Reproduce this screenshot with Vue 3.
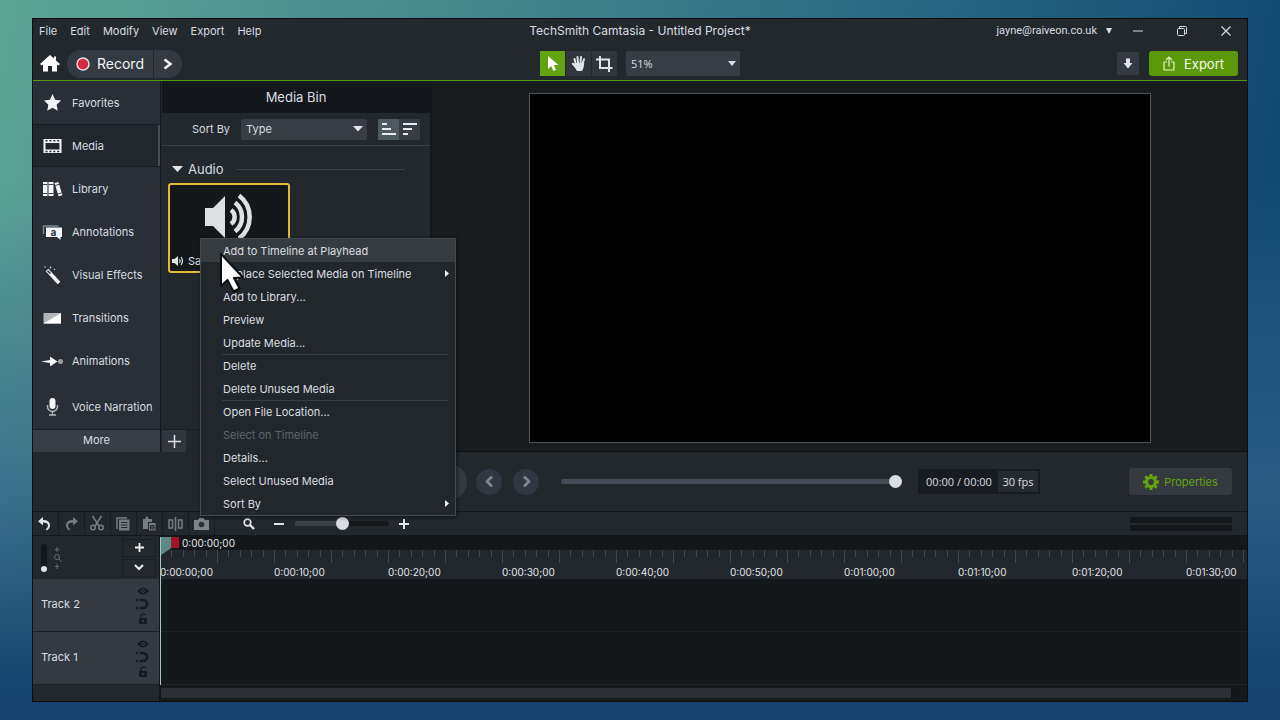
<script setup>
import { ref } from 'vue'

const menus = ['File', 'Edit', 'Modify', 'View', 'Export', 'Help']

const panels = [
  { name: 'Favorites', icon: 'star' },
  { name: 'Media', icon: 'film' },
  { name: 'Library', icon: 'books' },
  { name: 'Annotations', icon: 'callout' },
  { name: 'Visual Effects', icon: 'wand' },
  { name: 'Transitions', icon: 'transition' },
  { name: 'Animations', icon: 'arrow' },
  { name: 'Voice Narration', icon: 'mic' }
]
const activePanel = ref('Media')

const contextMenu = [
  { label: 'Add to Timeline at Playhead', hover: true },
  { label: 'Replace Selected Media on Timeline', sub: true },
  { label: 'Add to Library...' },
  { label: 'Preview' },
  { label: 'Update Media...' },
  { separator: true },
  { label: 'Delete' },
  { label: 'Delete Unused Media' },
  { separator: true },
  { label: 'Open File Location...' },
  { label: 'Select on Timeline', disabled: true },
  { label: 'Details...' },
  { label: 'Select Unused Media' },
  { label: 'Sort By', sub: true }
]

const marks = Array.from({ length: 10 }, (_, i) => {
  const s = i * 10
  return `0:${String(Math.floor(s / 60)).padStart(2, '0')}:${String(s % 60).padStart(2, '0')};00`
})

const tracks = ['Track 2', 'Track 1']
const zoom = ref('51%')
const sortBy = ref('Type')
const position = ref(100)
const timelineZoom = ref(50)
const trackHeight = ref(0)
</script>

<template>
  <div class="desktop">
    <div class="window">
      <header class="top">
        <div class="titlebar">
          <nav class="menus" aria-label="Main menu">
            <button v-for="m in menus" :key="m">{{ m }}</button>
          </nav>
          <h1>TechSmith Camtasia - Untitled Project*</h1>
          <div class="account">
            <button class="user">jayne@raiveon.co.uk <svg width="6" height="6" viewBox="0 0 6 6"><path d="M0 0h6L3 6z" fill="currentColor" /></svg></button>
            <button class="win" aria-label="Minimize"><svg width="12" height="12" viewBox="0 0 12 12"><path d="M1 6h10" stroke="currentColor" /></svg></button>
            <button class="win" aria-label="Restore"><svg width="12" height="12" viewBox="0 0 12 12" fill="none" stroke="currentColor"><rect x="1.500" y="3.500" width="7" height="7" rx="1" /><path d="M3.500 3.500V1.500H9.500Q10.500 1.500 10.500 2.500V8.500H8.500" /></svg></button>
            <button class="win" aria-label="Close"><svg width="12" height="12" viewBox="0 0 12 12"><path d="M1.500 1.500l9 9m0-9l-9 9" stroke="currentColor" stroke-width="1.200" /></svg></button>
          </div>
        </div>
        <div class="toolbar">
          <div class="left">
            <button class="home" aria-label="Home"><svg width="20" height="17" viewBox="0 0 20 17"><path d="M10 0L0 9l1.500 1.500L3 9.500V16.500H8V11h4v5.500h5V9.500l1.500 1L20 9l-4-3.600V1.500h-2V3.600z" fill="#fff" /></svg></button>
            <button class="record"><svg width="14" height="14" viewBox="0 0 14 14"><circle cx="7" cy="7" r="6" fill="#cf2a40" stroke="#f3dfe2" stroke-width="1.500" /></svg>Record</button>
            <button class="record-more" aria-label="Record options"><svg width="10" height="12" viewBox="0 0 10 12"><path d="M1.500 1.500L7.500 6l-6 4.500" fill="none" stroke="#fff" stroke-width="2.400" /></svg></button>
          </div>
          <div class="tools">
            <div class="modes">
              <button class="on" aria-label="Edit"><svg width="14" height="17" viewBox="0 0 14 17"><path d="M2 1v13l3.200-3 2.200 5 2.600-1.200-2.200-4.800H12.500z" fill="#fff" /></svg></button>
              <button aria-label="Pan"><svg width="16" height="17" viewBox="0 0 16 17" fill="none" stroke="#dfe4e8" stroke-linecap="round"><path d="M4.700 9L3.500 4M7 8L6.500 2M9.500 8L10 2M11.500 9L13 4.200" stroke-width="2" /><path d="M5 12L1.800 8.800" stroke-width="2.200" /><path d="M4 8h8.500l.8-.2L12.500 13 11 16H6L3.500 12z" fill="#dfe4e8" stroke="none" /></svg></button>
              <button aria-label="Crop"><svg width="17" height="16" viewBox="0 0 17 16" fill="none" stroke="#dfe4e8" stroke-width="2"><path d="M4 0v12h12.500M0 3.500h13V16" /></svg></button>
            </div>
            <label class="select zoom">
              <select v-model="zoom" aria-label="Canvas zoom"><option>51%</option><option>100%</option></select>
              <svg width="8" height="5" viewBox="0 0 8 5"><path d="M0 0h8L4 5z" fill="#d8dde1" /></svg>
            </label>
          </div>
          <div class="right">
            <button class="download" aria-label="Download"><svg width="10" height="11" viewBox="0 0 10 11"><path d="M3 0.500h4v4.500h2.500L5 10.500.5 5H3z" fill="#dfe4e8" /></svg></button>
            <button class="export"><svg width="12" height="15" viewBox="0 0 12 15" fill="none" stroke="#e3f0cf" stroke-width="1.200"><path d="M4 6H1v8h10V6H8M6 10.500V1.500M3 4l3-3 3 3" /></svg>Export</button>
          </div>
        </div>
      </header>

      <main class="work">
        <nav class="side" aria-label="Panels">
          <button v-for="p in panels" :key="p.name" :class="{ active: activePanel === p.name }" @click="activePanel = p.name">
            <svg width="22" height="20" viewBox="0 0 22 20" fill="#f4f6f7">
              <path v-if="p.icon === 'star'" d="M10.500 1l2.600 5.800 6 .7-4.500 4.200 1.200 6.100-5.300-3.100-5.300 3.100 1.200-6.100L2 7.500l6-.7z" />
              <g v-else-if="p.icon === 'film'"><path fill-rule="evenodd" d="M1.500 3h18v14h-18zM3.500 7v6.500h14V7z" /><path d="M3.500 4.800h14M3.500 15.500h14" stroke="#23282e" stroke-width="1.600" stroke-dasharray="2 1.900" /></g>
              <g v-else-if="p.icon === 'books'"><path d="M1 3h4.500v14H1zM6.500 3h5v14h-5zM12.500 4l3.900-1 4.100 13.200-3.900 1z" /><path d="M1 5.500h4.500M1 14.500h4.500M6.500 5.500h5M6.500 14.500h5M13 6.500l4.300-1.200M15.700 15l4.300-1.200" stroke="#394047" stroke-width="1" /></g>
              <g v-else-if="p.icon === 'callout'"><path d="M1.500 12V4h15" fill="none" stroke="#7e868e" stroke-width="1.500" /><path d="M4 5.500h16v9.500h-1.500v3l-3.500-3H4z" /><text x="8.500" y="13.500" font-size="10" font-weight="700" fill="#272e35">a</text></g>
              <g v-else-if="p.icon === 'wand'"><path d="M5 5l12 13" stroke="#f4f6f7" stroke-width="3.500" /><path d="M5.500 5.600l3 3.200" stroke="#3a4047" stroke-width="1.600" /><path d="M8.500 1l1 1.500-1 1.500-1-1.500zM12.500 3.500l1 1-1 1-1-1zM3 1l1 1-1 1-1-1z" fill="#a8afb5" /></g>
              <g v-else-if="p.icon === 'transition'"><path d="M1.500 5h17.500v10.500H1.500z" fill="#b2b6ba" /><path d="M19 5v10.500H1.500z" fill="#fff" /></g>
              <g v-else-if="p.icon === 'arrow'"><path d="M-1 10.500L8 9V5.500l7.500 5-7.500 5V12z" /><circle cx="18.500" cy="10.500" r="2.500" fill="#9aa1a7" /></g>
              <g v-else><rect x="7.500" y="1" width="6" height="11" rx="3" /><path d="M5.500 8v1.500a5 5 0 0 0 10 0V8M10.500 14.500V18M7 18h7" fill="none" stroke="#b5bbc0" stroke-width="1.400" /></g>
            </svg>
            <span>{{ p.name }}</span>
          </button>
          <button class="more">More</button>
        </nav>

        <section class="bin">
          <h2>Media Bin</h2>
          <div class="sort">
            <label for="sort">Sort By</label>
            <div class="select">
              <select id="sort" v-model="sortBy"><option>Type</option><option>Name</option></select>
              <svg width="10" height="6" viewBox="0 0 10 6"><path d="M0 0h10L5 5.500z" fill="#e4e7e9" /></svg>
            </div>
            <div class="order">
              <button class="on" aria-label="Ascending"><svg width="14" height="12" viewBox="0 0 14 12" stroke="#e8ecee" stroke-width="2"><path d="M0 1h5M0 6h9M0 11h14" /></svg></button>
              <button aria-label="Descending"><svg width="14" height="12" viewBox="0 0 14 12" stroke="#e8ecee" stroke-width="2"><path d="M0 1h14M0 6h9M0 11h5" /></svg></button>
            </div>
          </div>
          <div class="group">
            <button><svg width="11" height="6" viewBox="0 0 11 6"><path d="M0 0h11L5.500 6z" fill="#e4e7e9" /></svg>Audio</button>
            <hr>
          </div>
          <div class="thumb">
            <svg class="speaker" width="50" height="46" viewBox="0 0 50 46"><path d="M0 14h8L20 2v42L8 32H0z" fill="#dde1e4" /><path d="M26 16a8.500 8.500 0 0 1 0 14M30 8.500a18.500 18.500 0 0 1 0 29M34 1.500a27 27 0 0 1 0 43" fill="none" stroke="#dde1e4" stroke-width="4.500" /></svg>
            <div class="caption"><svg width="12" height="10" viewBox="0 0 12 10"><path d="M0 3h2.500L6 0v10L2.500 7H0z" fill="#e4e7e9" /><path d="M7.500 3q1.500 2 0 4M9 1q3 4 0 8" fill="none" stroke="#e4e7e9" stroke-width="1.200" /></svg>Sample</div>
          </div>
          <div class="bin-foot"><button aria-label="Import media"><svg width="13" height="13" viewBox="0 0 13 13"><path d="M6.500 0v13M0 6.500h13" stroke="#e0e3e6" stroke-width="1.500" /></svg></button></div>
        </section>

        <section class="stage" aria-label="Canvas"><div class="canvas"></div></section>
      </main>

      <section class="playback" aria-label="Playback">
        <button class="round play" aria-label="Play"><svg width="12" height="12" viewBox="0 0 12 12"><path d="M1 0l11 6-11 6z" fill="#aab0b6" /></svg></button>
        <button class="round" aria-label="Previous"><svg width="9" height="13" viewBox="0 0 9 13"><path d="M7 1.500L2 6.500l5 5" fill="none" stroke="#7f8792" stroke-width="2.600" /></svg></button>
        <button class="round next" aria-label="Next"><svg width="9" height="13" viewBox="0 0 9 13"><path d="M2 1.500l5 5-5 5" fill="none" stroke="#7f8792" stroke-width="2.600" /></svg></button>
        <input v-model="position" class="seek" type="range" aria-label="Position">
        <div class="time"><span>00:00 / 00:00</span><b>30 fps</b></div>
        <button class="props"><svg width="16" height="16" viewBox="0 0 16 16"><circle cx="8" cy="8" r="4.500" fill="none" stroke="#62a30f" stroke-width="3.200" /><path d="M8 0v3M8 13v3M0 8h3M13 8h3M2.300 2.300l2.200 2.200M11.500 11.500l2.200 2.200M13.700 2.300l-2.200 2.200M4.500 11.500l-2.200 2.200" stroke="#62a30f" stroke-width="3" /></svg>Properties</button>
      </section>

      <section class="edit" aria-label="Timeline tools">
        <button aria-label="Undo"><svg width="14" height="14" viewBox="0 0 14 14"><path d="M5 0v3q7 0 7 5.500 0 3-3.500 5L8 12q2-1.500 2-3.500 0-3-5-3v3L0 4.300z" fill="#e2e5e8" /></svg></button>
        <button aria-label="Redo"><svg width="14" height="14" viewBox="0 0 14 14"><path d="M9 0v3Q2 3 2 8.500q0 3 3.500 5L6 12Q4 10.500 4 8.500q0-3 5-3v3l5-4.200z" fill="#757c82" /></svg></button>
        <button aria-label="Cut"><svg width="14" height="15" viewBox="0 0 14 15" fill="none" stroke="#757c82" stroke-width="1.500"><path d="M2.500 0l6.500 10M11.500 0L5 10" /><circle cx="3" cy="11.500" r="2.300" /><circle cx="11" cy="11.500" r="2.300" /></svg></button>
        <button aria-label="Copy"><svg width="14" height="14" viewBox="0 0 14 14"><path d="M1 12V1h10" fill="none" stroke="#757c82" stroke-width="1.500" /><path d="M3 2.500h10.500v11H3z" fill="#757c82" /><path d="M5 5.500h6.500M5 8h6.500M5 10.500h6.500" stroke="#23282d" /></svg></button>
        <button aria-label="Paste"><svg width="14" height="15" viewBox="0 0 14 15"><path d="M1 3h2L5 0l2 3h3v3H6v7H1z" fill="#757c82" /><path d="M7 7h6.500v7.500H7z" fill="#757c82" /><path d="M8.500 9.500H12v3.500H8.500zm0 1.700H12" fill="none" stroke="#23282d" /></svg></button>
        <button aria-label="Split"><svg width="15" height="14" viewBox="0 0 15 14" fill="none" stroke="#757c82" stroke-width="1.500"><path d="M1 3h3.500v8H1zM10.500 3H14v8h-3.500zM7.500 0v14" /></svg></button>
        <button aria-label="Snapshot"><svg width="15" height="12" viewBox="0 0 15 12"><path d="M0 2h4l1.500-2h4L11 2h4v10H0z" fill="#7d848a" /><circle cx="7.500" cy="6.500" r="2.800" fill="#2b3137" /></svg></button>
        <div class="zoomer">
          <svg width="12" height="12" viewBox="0 0 12 12" fill="none" stroke="#dfe3e6"><circle cx="4.500" cy="4.500" r="3.300" stroke-width="1.700" /><path d="M7 7l4 4" stroke-width="2.400" /></svg>
          <button aria-label="Zoom out"><svg width="10" height="10" viewBox="0 0 10 10"><path d="M0 5h10" stroke="#dfe3e6" stroke-width="2" /></svg></button>
          <input v-model="timelineZoom" class="zoom-range" type="range" aria-label="Timeline zoom">
          <button aria-label="Zoom in"><svg width="10" height="10" viewBox="0 0 10 10"><path d="M0 5h10M5 0v10" stroke="#dfe3e6" stroke-width="2" /></svg></button>
        </div>
        <div class="meters"><i></i><i></i></div>
      </section>

      <section class="timeline" aria-label="Timeline">
        <div class="heads">
          <div class="corner">
            <input v-model="trackHeight" class="vertical" type="range" aria-label="Track height">
            <svg width="9" height="22" viewBox="0 0 9 22" fill="none" stroke="#666d73"><circle cx="4" cy="10" r="2.500" /><path d="M6 12l2.500 2.500M4 0v5M2 2.500h4M4 17v5M2 19.500h4" /></svg>
            <div class="add">
              <button aria-label="Add track"><svg width="9" height="9" viewBox="0 0 9 9"><path d="M0 4.500h9M4.500 0v9" stroke="#f0f2f3" stroke-width="1.800" /></svg></button>
              <button aria-label="Collapse"><svg width="10" height="7" viewBox="0 0 10 7"><path d="M1 1l4 4 4-4" fill="none" stroke="#f0f2f3" stroke-width="2" /></svg></button>
            </div>
          </div>
          <div v-for="t in tracks" :key="t" class="head">
            <span>{{ t }}</span>
            <div class="toggles">
              <button aria-label="Visibility"><svg width="12" height="8" viewBox="0 0 12 8"><path d="M0 4q6-7 12 0-6 7-12 0z" fill="#171b1f" /><circle cx="6" cy="4" r="2" fill="#363c43" /><circle cx="6" cy="4" r="1" fill="#171b1f" /></svg></button>
              <button aria-label="Magnet"><svg width="13" height="12" viewBox="0 0 13 12" fill="none" stroke="#171b1f" stroke-width="2.600"><path d="M3.500 2H7a4 4 0 0 1 0 8H3.500M0 2h2M0 10h2" /></svg></button>
              <button aria-label="Lock"><svg width="10" height="11" viewBox="0 0 10 11"><path d="M1 5h8v6H1z" fill="#171b1f" /><path d="M3 5V2.500Q5 0 7.500 2" fill="none" stroke="#171b1f" stroke-width="1.300" /><circle cx="5" cy="8" r="1.200" fill="#363c43" /></svg></button>
            </div>
          </div>
          <div class="foot"></div>
        </div>
        <div class="lanes">
          <div class="clock">0:00:00;00</div>
          <div class="ruler">
            <div v-for="m in marks" :key="m" class="mark">
              <div class="ticks"><i v-for="n in 10" :key="n"></i></div>
              <span>{{ m }}</span>
            </div>
          </div>
          <div v-for="t in tracks" :key="t" class="lane"></div>
          <div class="foot"><div class="scroll"></div></div>
          <div class="playhead"><svg width="20" height="18" viewBox="0 0 20 18"><path d="M0 0h10.500v11L0 18z" fill="#5f8885" /><path d="M10.500 0H18v11h-7.500z" fill="#a5142a" /></svg></div>
        </div>
      </section>

      <div class="context" role="menu">
        <template v-for="(c, i) in contextMenu" :key="i">
          <hr v-if="c.separator">
          <button v-else role="menuitem" :class="{ hover: c.hover }" :disabled="c.disabled">
            {{ c.label }}
            <svg v-if="c.sub" width="4" height="7" viewBox="0 0 4 7"><path d="M0 0l4 3.500L0 7z" fill="#f0f2f3" /></svg>
          </button>
        </template>
      </div>
      <svg class="pointer" width="28" height="42" viewBox="0 0 28 42"><path d="M2 2v32l6.500-6 6 11.500 6-3L15 26l9-.5z" fill="#fff" stroke="#0c0e10" stroke-width="2" stroke-linejoin="round" /></svg>
    </div>
  </div>
</template>

<style>
body { margin: 0; background: #16466f; }
</style>

<style scoped>
* { box-sizing: border-box; }
.desktop {
  height: 100vh; min-height: 640px; padding: 18px 32px 18px;
  display: flex;
  background:
    linear-gradient(to bottom, rgba(50, 98, 138, 0) 25%, rgba(50, 98, 138, .75) 68%, #13436e 97%),
    linear-gradient(100deg, #5ca594 0%, #43838b 38%, #276480 68%, #124a74 92%);
  font: 400 11px/16px Inter, "Liberation Sans", sans-serif; color: #dadde0;
}
button, select, input { font: inherit; color: inherit; margin: 0; }
button { border: 0; padding: 0; background: none; display: flex; align-items: center; justify-content: center; white-space: nowrap; }
svg { display: block; flex: none; overflow: visible; }
h1, h2 { margin: 0; font-weight: 400; }
hr { border: 0; margin: 0; height: 1px; }
.window { position: relative; flex: 1; min-width: 0; display: flex; flex-direction: column; background: #23282d; border: 1px solid #0b0e11; }

.top { border-bottom: 1px solid #5a9a12; }
.titlebar, .toolbar { display: grid; grid-template-columns: 1fr auto 1fr; align-items: center; }
.titlebar { height: 24px; }
.toolbar { height: 37px; padding-top: 4px; }
.menus { display: flex; gap: 13px; padding-left: 6px; }
h1 { font-size: 12px; }
.account { display: flex; justify-content: flex-end; align-items: center; padding-right: 15px; }
.user { font: 11px/16px Roboto, sans-serif; gap: 9px; margin-right: 20px; }
.win { width: 12px; height: 16px; }
.win + .win { margin-left: 32px; }
.left, .right, .tools, .modes { display: flex; align-items: center; }
.left { padding-left: 7px; }
.home { margin-right: 7px; }
.record, .record-more { height: 28px; background: #343a41; color: #f1f3f4; font-size: 14px; }
.record { width: 86px; gap: 7px; border-radius: 14px 0 0 14px; }
.record-more { width: 28px; margin-left: 1px; border-radius: 0 14px 14px 0; }
.tools { gap: 9px; }
.modes { gap: 1px; }
.modes button { width: 25px; height: 25px; background: #30363d; }
.modes .on { background: #62a30f; }
.select { display: grid; align-items: center; background: #373d44; border-radius: 2px; }
.select select, .select svg { grid-area: 1 / 1; }
.select select { appearance: none; width: 100%; border: 0; padding: 0 24px 0 5px; background: none; height: 22px; }
.select svg { justify-self: end; margin-right: 4px; pointer-events: none; }
.zoom { width: 114px; font: 11px/16px "Open Sans", sans-serif; }
.zoom select { height: 25px; }
.right { justify-content: flex-end; padding-right: 9px; gap: 10px; }
.download { width: 22px; height: 23px; background: #343a41; }
.export { width: 89px; height: 25px; background: #5b990b; color: #f6faef; font-size: 13px; gap: 9px; border-radius: 3px; }

.work { flex: 1; min-height: 0; display: flex; }
.side { width: 128px; display: flex; flex-direction: column; background: #282f36; border-right: 1px solid #14181c; }
.side button { height: 43px; justify-content: flex-start; padding-left: 9px; gap: 8px; }
.side .active { background: #22272d; border: solid #181c21; border-width: 1px 0; box-shadow: inset -2px 0 #464d54; }
.side button:nth-last-child(2) { flex: 1; padding-top: 3px; }
.side .more { height: 23px; background: #373e45; justify-content: center; padding: 0 0 2px; border-top: 1px solid #181c20; }
.bin { width: 271px; display: flex; flex-direction: column; border-right: 2px solid #14181c; padding-left: 1px; }
h2 { height: 32px; background: #14181c; text-align: center; font-size: 13px; line-height: 32px; }
.sort { height: 33px; display: flex; align-items: center; padding-left: 30px; border-bottom: 1px solid #383f45; }
.sort .select { width: 126px; margin: 0 11px; }
.sort .select select { height: 21px; }
.order { display: flex; }
.order button { width: 21px; height: 21px; background: #373d44; }
.order .on { background: #4d5a60; }
.group { display: flex; align-items: center; gap: 12px; height: 36px; padding: 10px 25px 0 10px; }
.group button { gap: 5px; font-size: 13px; }
.group hr { flex: 1; background: #3b4247; }
.thumb { width: 122px; height: 90px; margin: 1px 0 0 6px; border: 2px solid #e2b93b; border-radius: 3px; background: #14181b; display: flex; flex-direction: column; justify-content: space-between; }
.speaker { margin: 9px 0 0 35px; }
.caption { display: flex; align-items: center; gap: 4px; padding: 0 0 2px 2px; }
.bin-foot { margin-top: auto; border-top: 1px solid #1a1e22; height: 23px; display: flex; }
.bin-foot button { width: 24px; background: #31373e; }
.stage { flex: 1; min-width: 0; background: #1a1d20; padding: 12px 0 8px 1px; display: flex; justify-content: center; border-bottom: 1px solid #0c0f12; }
.canvas { height: 100%; aspect-ratio: 16 / 9; background: #000; border: 1px solid #50585a; }

.playback { height: 60px; padding: 0 15px 0 398px; display: flex; align-items: center; border-bottom: 1px solid #14181c; }
.round { flex: none; width: 26px; height: 26px; border-radius: 50%; background: #303740; }
.round.play { width: 36px; height: 36px; margin-right: 9px; background: #353a3f; }
.round.next { margin: 0 22px 0 11px; }
input[type=range] { appearance: none; background: none; }
.seek { flex: 1; min-width: 60px; height: 14px; }
.seek::-webkit-slider-runnable-track { height: 5px; border-radius: 3px; background: #454a55; }
.seek::-webkit-slider-thumb { appearance: none; width: 13px; height: 13px; margin-top: -4px; border-radius: 50%; background: #dadee4; }
.time { display: flex; width: 122px; height: 25px; margin: 0 89px 0 16px; padding: 2px; background: #181c21; font: 11px/22px "Open Sans", sans-serif; }
.time span { flex: 1; text-align: center; }
.time b { width: 40px; font-weight: 400; text-align: center; background: #262b31; }
.props { width: 103px; height: 27px; background: #343a40; color: #62a30f; gap: 5px; border-radius: 3px; }

.edit { height: 24px; display: flex; align-items: center; border-bottom: 1px solid #14181c; padding-right: 15px; }
.edit > button { width: 26px; height: 23px; padding-right: 1px; border-right: 1px solid #1a1e22; }
.zoomer { display: flex; align-items: center; margin-left: 28px; }
.zoomer button { width: 10px; height: 12px; }
.zoomer svg + button { margin-left: 19px; }
.zoom-range { width: 94px; height: 14px; margin: 0 10px 0 11px; }
.zoom-range::-webkit-slider-runnable-track { height: 5px; border-radius: 3px; background: linear-gradient(to right, #3e4349 50%, #15191c 50%); }
.zoom-range::-webkit-slider-thumb { appearance: none; width: 13px; height: 13px; margin-top: -4px; border-radius: 50%; background: #d9dde1; }
.meters { margin-left: auto; width: 102px; display: grid; gap: 2px; }
.meters i { height: 6px; background: #14181b; }

.timeline { display: flex; }
.heads { width: 127px; border-right: 1px solid #14181c; }
.corner { height: 43px; display: flex; align-items: center; padding: 0 3px 0 7px; }
.vertical { width: 8px; height: 28px; writing-mode: vertical-lr; direction: rtl; }
.vertical::-webkit-slider-runnable-track { width: 6px; height: 28px; border-radius: 3px; background: #14181c; }
.vertical::-webkit-slider-thumb { appearance: none; width: 6px; height: 6px; border-radius: 50%; background: #e4e7e9; }
.vertical + svg { margin-left: 5px; }
.add { margin-left: auto; display: grid; gap: 2px; }
.add button { width: 34px; height: 18px; border: 1px solid #1b1f23; }
.head { height: 53px; padding: 0 10px 0 8px; display: flex; align-items: center; justify-content: space-between; background: #343a41; border-bottom: 1px solid #1c2024; }
.head span { padding-bottom: 2px; }
.toggles { display: grid; justify-items: center; gap: 3px; }
.foot { height: 16px; }
.lanes { position: relative; flex: 1; min-width: 0; background: #14181b; }
.clock { height: 14px; padding-left: 22px; line-height: 14px; color: #e4e6e8; font-size: 10px; }
.ruler { display: flex; height: 29px; overflow: hidden; background: #22272d; font-size: 10px; }
.mark { flex: none; width: 114px; }
.ticks { display: flex; height: 15px; }
.ticks i { flex: 1; height: 7px; border-left: 1px solid #42484e; }
.ticks i:nth-child(5n + 1) { height: 13px; }
.mark span { display: block; line-height: 14px; color: #e4e6e8; }
.lane { height: 53px; border-bottom: 1px solid #1e2226; }
.lanes .foot { padding: 3px 16px 0 1px; }
.scroll { height: 10px; background: #2b2f35; }
.playhead { position: absolute; left: 0; top: 1px; bottom: 16px; border-left: 1px solid #a9c4c6; }

.context { position: absolute; left: 167px; top: 219px; width: 256px; border: 1px solid #43494e; background: #22272c; box-shadow: 1px 1px 4px rgba(0, 0, 0, .5); }
.context button { width: 100%; height: 23px; padding: 0 6px 0 22px; justify-content: space-between; color: #dcdfe1; }
.context .hover { background: #363b40; }
.context button:disabled { color: #60666b; }
.context hr { background: #383e43; margin: 0 7px -1px 21px; }
.pointer { position: absolute; left: 186px; top: 233px; }
</style>
